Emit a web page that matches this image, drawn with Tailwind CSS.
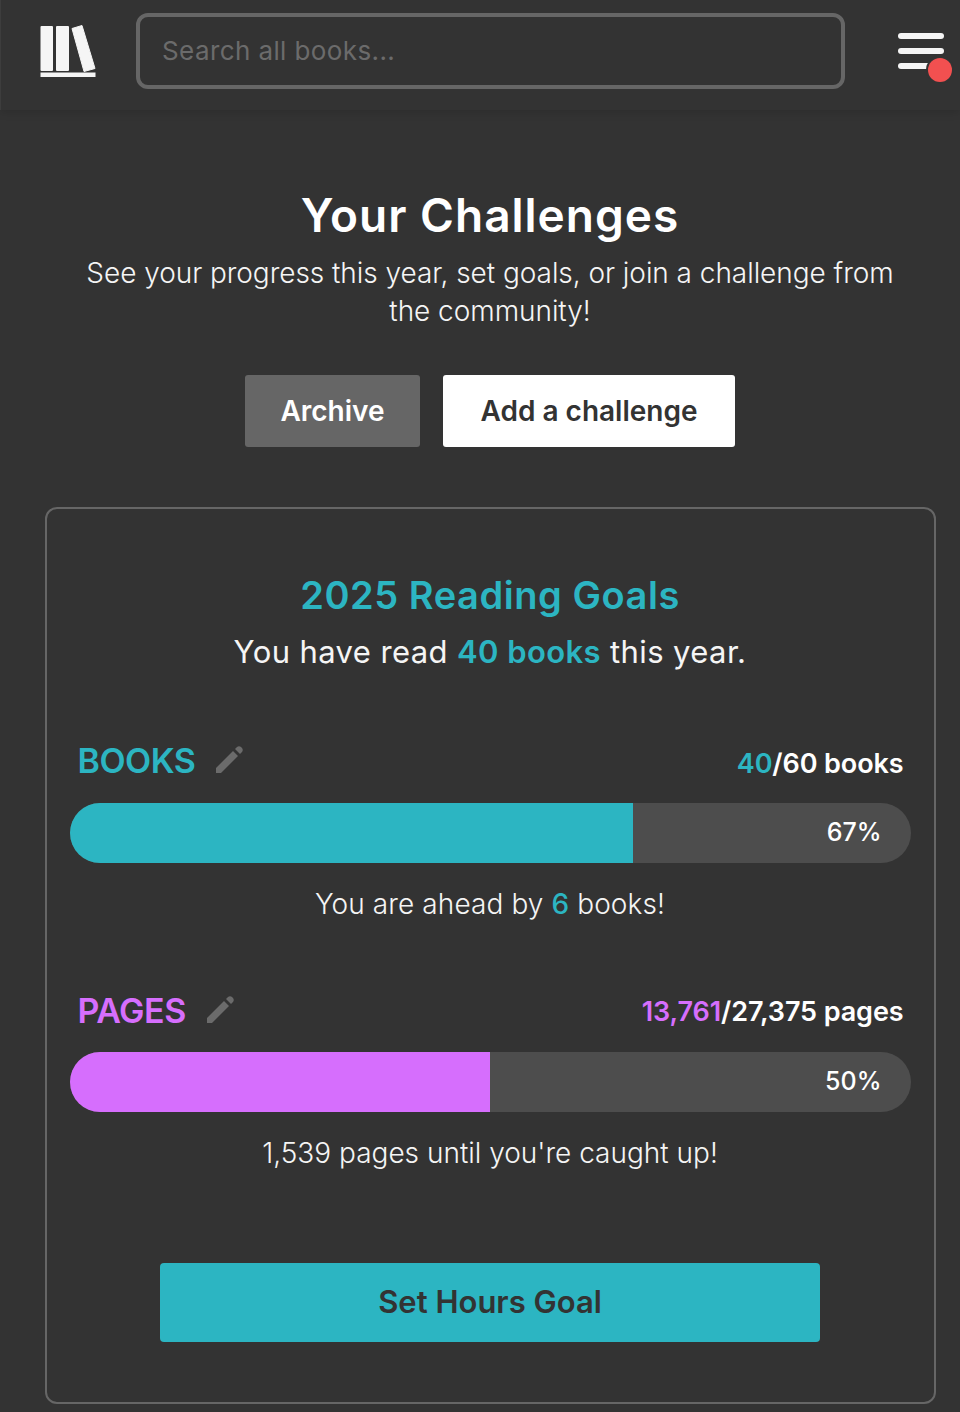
<!DOCTYPE html>
<html lang="en">
<head>
    <meta charset="UTF-8">
    <meta name="viewport" content="width=device-width, initial-scale=1.0">
    <title>Your Challenges</title>
    <script src="https://cdn.jsdelivr.net/npm/@tailwindcss/browser@4"></script>
</head>
<body class="bg-[#333333] font-['Inter',sans-serif] text-[#f5f5f5] h-[1412px] overflow-hidden">
    <!-- Header -->
    <header class="h-[110px] flex items-center pb-[9px] border-l border-[#3d3d3d] shadow-[0_3px_8px_rgba(0,0,0,0.12)]">
        <svg class="w-[58px] h-[58px] ml-[39px] shrink-0" viewBox="0 0 58 58" fill="#f5f5f5">
            <rect x="0.5" y="4" width="12.5" height="45" rx="1"/>
            <rect x="16" y="4" width="13" height="45" rx="1"/>
            <polygon points="32,6.5 42,3.5 55,46.5 44,49.5" stroke="#f5f5f5" stroke-width="1" stroke-linejoin="round"/>
            <rect x="0.5" y="50.5" width="55" height="4.5"/>
        </svg>
        <div class="ml-[38px] w-[709px] h-[76px] border-4 border-[#666666] rounded-xl flex items-center pl-[22px] text-[26px] tracking-[0.4px] text-[#6b6b6b]">Search all books...</div>
        <div class="relative ml-[53px] w-[46px] h-[36px] flex flex-col justify-between">
            <div class="h-[6px] bg-[#f5f5f5] rounded-full"></div>
            <div class="h-[6px] bg-[#f5f5f5] rounded-full"></div>
            <div class="h-[6px] bg-[#f5f5f5] rounded-full"></div>
            <div class="absolute left-[30px] top-[25px] w-[24px] h-[24px] rounded-full bg-[#f25050] ring-2 ring-[#333333]"></div>
        </div>
    </header>

    <main class="flex flex-col items-center pl-[20px]">
        <h1 class="mt-[77px] text-[46px] leading-[56px] font-semibold text-white tracking-[1px]">Your Challenges</h1>
        <p class="mt-[11px] w-[840px] text-center text-[28px] leading-[38px] font-light tracking-[-0.05px]">See your progress this year, set goals, or join a challenge from the community!</p>

        <div class="mt-[45px] flex gap-[23px]">
            <button class="w-[175px] h-[72px] bg-[#666666] rounded-[3px] text-[28px] font-semibold text-white">Archive</button>
            <button class="w-[292px] h-[72px] bg-white rounded-[3px] text-[28px] font-semibold text-[#333333]">Add a challenge</button>
        </div>

        <!-- Goals card -->
        <section class="mt-[60px] w-[891px] h-[897px] border-2 border-[#666666] rounded-xl px-[23px] flex flex-col">
            <h2 class="mt-[61px] text-center text-[38px] leading-[50px] font-semibold tracking-[0.55px] text-[#2cb5c2]">2025 Reading Goals</h2>
            <p class="mt-[10px] text-center text-[31px] leading-[44px] tracking-[0.4px]">You have read <span class="font-semibold text-[#2cb5c2]">40 books</span> this year.</p>

            <!-- Books -->
            <div class="mt-[61px] flex items-center justify-between pl-[8px] pr-[7px] h-[50px]">
                <div class="flex items-center gap-[20px]">
                    <span class="text-[34px] font-semibold tracking-[-0.5px] text-[#2cb5c2]">BOOKS</span>
                    <svg class="w-[28px] h-[28px]" viewBox="0 0 28 28" fill="#6b6b6b"><path d="M1 22 18 5l5 5L6 27H1z"/><path d="M20 3l2-2c1-1 3-1 4 0l1 1c1 1 1 3 0 4l-2 2z"/></svg>
                </div>
                <div class="text-[27px] mt-[8px] font-semibold tracking-[-0.1px] text-white"><span class="text-[#2cb5c2]">40</span>/60 books</div>
            </div>
            <div class="mt-[18px] h-[60px] bg-[#4d4d4d] rounded-full overflow-hidden flex items-center justify-between">
                <div class="w-[67%] h-full bg-[#2cb5c2]"></div>
                <span class="mr-[29px] text-[25px] font-medium text-white">67%</span>
            </div>
            <p class="mt-[20px] text-center text-[28px] leading-[42px] font-light tracking-[0.1px]">You are ahead by <span class="font-medium text-[#2cb5c2]">6</span> books!</p>

            <!-- Pages -->
            <div class="mt-[60px] flex items-center justify-between pl-[8px] pr-[7px] h-[50px]">
                <div class="flex items-center gap-[20px]">
                    <span class="text-[34px] font-semibold tracking-[-0.5px] text-[#d66efd]">PAGES</span>
                    <svg class="w-[28px] h-[28px]" viewBox="0 0 28 28" fill="#6b6b6b"><path d="M1 22 18 5l5 5L6 27H1z"/><path d="M20 3l2-2c1-1 3-1 4 0l1 1c1 1 1 3 0 4l-2 2z"/></svg>
                </div>
                <div class="text-[27px] mt-[4px] font-semibold tracking-[-0.1px] text-white"><span class="text-[#d66efd]">13,761</span>/27,375 pages</div>
            </div>
            <div class="mt-[17px] h-[60px] bg-[#4d4d4d] rounded-full overflow-hidden flex items-center justify-between">
                <div class="w-[50%] h-full bg-[#d66efd]"></div>
                <span class="mr-[29px] text-[25px] font-medium text-white">50%</span>
            </div>
            <p class="mt-[20px] text-center text-[28px] leading-[42px] font-light">1,539 pages until you're caught up!</p>

            <button class="mt-[89px] self-center w-[660px] h-[79px] bg-[#2cb5c2] rounded-[4px] text-[31px] font-semibold text-[#333333]">Set Hours Goal</button>
        </section>
    </main>
</body>
</html>
